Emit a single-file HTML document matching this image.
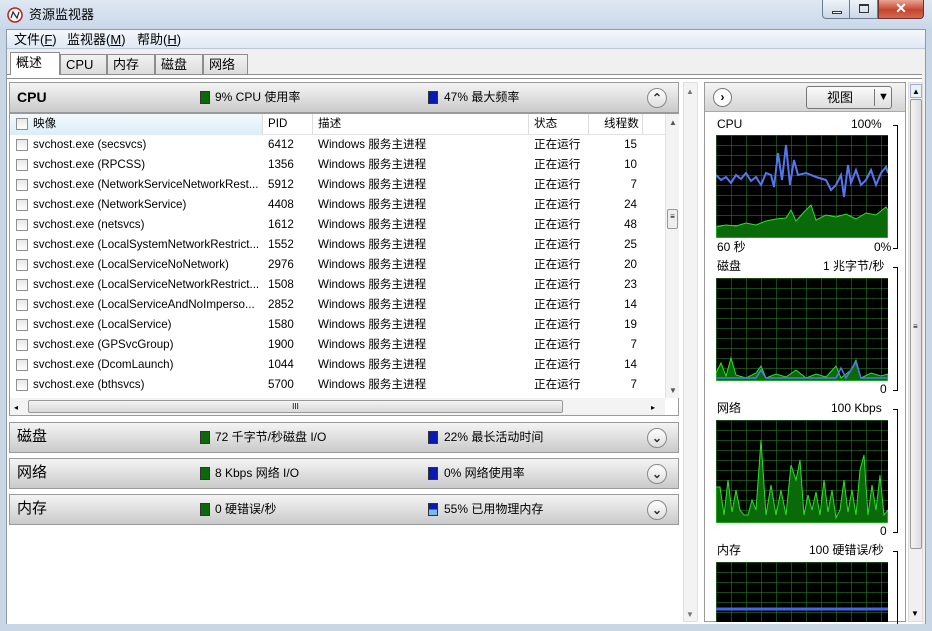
<!DOCTYPE html>
<html><head><meta charset="utf-8">
<style>
*{margin:0;padding:0;box-sizing:border-box}
body{width:932px;height:631px;overflow:hidden;background:#c9d6e6;font-family:"Liberation Sans","Noto Sans CJK SC",sans-serif;font-size:12px;line-height:14px;color:#000;position:relative}
.a{position:absolute}
.title{left:0;top:0;width:932px;height:30px;background:linear-gradient(#dfe8f2,#c8d7e8)}
.frame{left:6px;top:29px;width:920px;height:596px;background:#f0f0f0;border:1px solid #8a9bb0}
.menu{left:7px;top:30px;width:918px;height:19px;background:linear-gradient(#f5f8fc,#dfe8f4);border-bottom:1px solid #b9c7d8}
.menu span{position:absolute;top:2px;font-size:13px;line-height:15px}
.tab{top:54px;height:20px;border:1px solid #8d8d8d;border-bottom:none;background:linear-gradient(#f2f2f2,#dcdcdc);font-size:13px;line-height:15px;padding:2px 0 0 5px}
.content{left:7px;top:74px;width:915px;height:4px;border-top:1px solid #8d8d8d;background:#fff}
.sect{left:9px;width:670px;height:31px;background:linear-gradient(#f4f4f4 0%,#e2e2e2 45%,#c9c9c9 100%);border:1px solid #9a9a9a}
.sect .h{position:absolute;left:7px;top:6px;font-size:15px;line-height:16px}
.sect .l{position:absolute;top:7px;font-size:12px;line-height:14px}
.sq{position:absolute;top:8px;width:10px;height:13px;border:1px solid #333}
.g{background:#0a6a0a}.b{background:#0a1ab0}
.btn{position:absolute;right:11px;top:5px;width:20px;height:20px;border-radius:50%;border:1px solid #888;background:linear-gradient(#fff,#ddd);font-size:12px;text-align:center;line-height:18px;font-weight:bold;color:#333}
.tbl{left:9px;top:113px;width:670px;height:303px;background:#fff;border:1px solid #9a9a9a}
.row{position:absolute;left:0;height:20px;width:655px;font-size:11.6px}
.row span{position:absolute;top:3px;white-space:nowrap;line-height:14px}
.cb{position:absolute;left:6px;top:4px;width:12px;height:12px;border:1px solid #8f8f8f;background:linear-gradient(#e8e8e8,#fff)}
.panel{left:704px;top:82px;width:202px;height:540px;background:#fff;border:1px solid #9a9a9a}
.gl{position:absolute;font-size:12px;line-height:14px}
.brk{position:absolute;left:188px;width:5px;border:1px solid #000;border-left:none}
</style></head><body>
<div class="a title"></div>
<svg class="a" style="left:7px;top:7px" width="16" height="16"><circle cx="8" cy="8" r="7" fill="#fff" stroke="#b22" stroke-width="1.5"/><path d="M4 11 L6 5 L10 11 L12 5" stroke="#333" fill="none" stroke-width="1.3"/></svg>
<div class="a" style="left:29px;top:7px;font-size:13px;line-height:15px">资源监视器</div>
<div class="a" style="left:822px;top:0;width:28px;height:19px;border:1px solid #6b7b90;border-top:none;border-radius:0 0 0 4px;background:linear-gradient(#eef3f9,#cbd7e6)"><div class="a" style="left:9px;top:11px;width:10px;height:3px;border:1px solid #333;background:#fff"></div></div>
<div class="a" style="left:850px;top:0;width:28px;height:19px;border:1px solid #6b7b90;border-top:none;border-left:none;background:linear-gradient(#eef3f9,#cbd7e6)"><div class="a" style="left:9px;top:4px;width:10px;height:9px;border:1px solid #333;border-top-width:2px"></div></div>
<div class="a" style="left:878px;top:0;width:46px;height:19px;border:1px solid #6b3030;border-top:none;border-radius:0 0 4px 0;background:linear-gradient(#e9a595,#c6452e 55%,#d26a50);color:#fff;font-weight:bold;text-align:center;font-size:14px;line-height:16px">✕</div>
<div class="a frame"></div>
<div class="a menu"><span style="left:7px">文件(<u>F</u>)</span><span style="left:60px">监视器(<u>M</u>)</span><span style="left:130px">帮助(<u>H</u>)</span></div>
<div class="a content"></div>
<div class="a tab" style="left:10px;top:52px;width:50px;height:23px;background:#fff;z-index:2">概述</div>
<div class="a tab" style="left:60px;width:47px">CPU</div>
<div class="a tab" style="left:107px;width:48px">内存</div>
<div class="a tab" style="left:155px;width:48px">磁盘</div>
<div class="a tab" style="left:203px;width:45px">网络</div>
<div class="a" style="left:7px;top:78px;width:915px;height:546px;background:#fff;border-top:1px solid #8d8d8d"></div>

<div class="a sect" style="top:82px"><div class="h" style="font-weight:bold;font-size:14px">CPU</div><div class="sq g" style="left:190px"></div><div class="l" style="left:205px">9% CPU 使用率</div><div class="sq b" style="left:418px"></div><div class="l" style="left:434px">47% 最大频率</div><div class="btn">⌃</div></div>

<div class="a tbl">
<div class="a" style="left:0;top:0;width:655px;height:21px;background:#fff;border-bottom:1px solid #e3e3e3"></div>
<div class="a" style="left:0;top:0;width:252px;height:21px;background:linear-gradient(#f3f9fd,#dbedf8)"></div>
<div class="row" style="top:0"><div class="cb"></div><span style="left:23px">映像</span><span style="left:258px">PID</span><span style="left:308px">描述</span><span style="left:524px">状态</span><span style="left:594px">线程数</span></div>
<div class="a" style="left:252px;top:0;width:1px;height:21px;background:#ddd"></div><div class="a" style="left:302px;top:0;width:1px;height:21px;background:#ddd"></div><div class="a" style="left:518px;top:0;width:1px;height:21px;background:#ddd"></div><div class="a" style="left:578px;top:0;width:1px;height:21px;background:#ddd"></div><div class="a" style="left:632px;top:0;width:1px;height:21px;background:#ddd"></div>
<div class="a" style="left:655px;top:0;width:14px;height:284px;background:#f3f3f3;border-left:1px solid #e3e3e3"><div class="a" style="left:1px;top:95px;width:11px;height:20px;border:1px solid #999;border-radius:2px;background:#eee;font-size:8px;text-align:center">≡</div><div class="a" style="left:3px;top:2px;font-size:8px;color:#555">▲</div><div class="a" style="left:3px;top:270px;font-size:8px;color:#555">▼</div></div>
<div class="a" style="left:0;top:284px;width:655px;height:17px;background:#f3f3f3"><div class="a" style="left:18px;top:2px;width:535px;height:13px;border:1px solid #999;border-radius:2px;background:linear-gradient(#f4f4f4,#d8d8d8);text-align:center;font-size:8px;line-height:11px">III</div><div class="a" style="left:4px;top:3px;font-size:8px">◂</div><div class="a" style="left:641px;top:3px;font-size:8px">▸</div></div>
<div id="rows"></div>
</div>

<div class="a sect" style="top:422px"><div class="h">磁盘</div><div class="sq g" style="left:190px"></div><div class="l" style="left:205px">72 千字节/秒磁盘 I/O</div><div class="sq b" style="left:418px"></div><div class="l" style="left:434px">22% 最长活动时间</div><div class="btn">⌄</div></div>
<div class="a sect" style="top:458px"><div class="h">网络</div><div class="sq g" style="left:190px"></div><div class="l" style="left:205px">8 Kbps 网络 I/O</div><div class="sq b" style="left:418px"></div><div class="l" style="left:434px">0% 网络使用率</div><div class="btn">⌄</div></div>
<div class="a sect" style="top:494px"><div class="h">内存</div><div class="sq g" style="left:190px"></div><div class="l" style="left:205px">0 硬错误/秒</div><div class="sq b" style="left:418px;background:linear-gradient(#0a1ab0 50%,#7ab8f0 50%)"></div><div class="l" style="left:434px">55% 已用物理内存</div><div class="btn">⌄</div></div>

<div class="a" style="left:683px;top:82px;width:15px;height:540px;background:#f3f3f3;border:1px solid #e0e0e0"><div class="a" style="left:2px;top:2px;font-size:8px;color:#777">▲</div><div class="a" style="left:2px;top:525px;font-size:8px;color:#777">▼</div></div>
<div class="a" style="left:908px;top:82px;width:15px;height:540px;background:#f0f0f0;border:1px solid #ddd"><div class="a" style="left:1px;top:1px;width:12px;height:14px;border:1px solid #aac;background:#e8f0f8;font-size:8px;text-align:center">▲</div><div class="a" style="left:1px;top:16px;width:12px;height:450px;border:1px solid #999;border-radius:2px;background:linear-gradient(90deg,#f4f4f4,#dcdcdc)"><div class="a" style="left:2px;top:220px;font-size:8px">≡</div></div><div class="a" style="left:2px;top:524px;font-size:8px">▼</div></div>

<div class="a panel">
<div class="a" style="left:0;top:0;width:200px;height:29px;background:linear-gradient(#f4f4f4,#d4d4d4);border-bottom:1px solid #aaa"><div class="a" style="left:8px;top:5px;width:19px;height:19px;border-radius:50%;border:1px solid #777;background:#fff;text-align:center;font-weight:bold;line-height:16px">›</div><div class="a" style="left:101px;top:3px;width:86px;height:23px;border:1px solid #777;border-radius:3px;background:linear-gradient(#fafafa,#dedede);font-size:13px"><span class="a" style="left:20px;top:3px;line-height:15px">视图</span><div class="a" style="left:67px;top:2px;width:1px;height:17px;background:#777"></div><span class="a" style="left:71px;top:3px;font-size:11px">▼</span></div></div>
<div class="gl" style="left:12px;top:34px">CPU</div><div class="gl" style="left:146px;top:34px">100%</div>
<div class="gl" style="left:12px;top:157px">60 秒</div><div class="gl" style="left:169px;top:157px">0%</div>
<div class="brk" style="top:42px;height:124px"></div>
<div class="gl" style="left:12px;top:176px">磁盘</div><div class="gl" style="left:118px;top:176px">1 兆字节/秒</div>
<div class="gl" style="left:175px;top:299px">0</div><div class="brk" style="top:184px;height:124px"></div>
<div class="gl" style="left:12px;top:318px">网络</div><div class="gl" style="left:126px;top:318px">100 Kbps</div>
<div class="gl" style="left:175px;top:441px">0</div><div class="brk" style="top:326px;height:124px"></div>
<div class="gl" style="left:12px;top:460px">内存</div><div class="gl" style="left:104px;top:460px">100 硬错误/秒</div>
<div class="brk" style="top:468px;height:80px;border-bottom:none"></div>
</div>

<svg class="a" style="left:716px;top:135px" width="172" height="103">
<defs><pattern id="gr" width="15" height="10" patternUnits="userSpaceOnUse"><path d="M0 0V10M0 0H15" stroke="#2e8b2e" stroke-width="1" fill="none"/></pattern></defs>
<rect width="172" height="103" fill="#000"/><rect width="172" height="103" fill="url(#gr)"/>
<polygon points="0,103 0,92 10,90 20,91 30,88 40,90 50,86 60,84 70,83 75,75 80,86 88,77 95,70 100,85 110,80 120,82 130,79 140,84 150,78 160,80 170,72 172,75 172,103" fill="#0a6a0a" stroke="#2ede2e"/>
<polyline points="0,40 5,45 10,42 15,48 20,40 25,44 30,38 35,46 40,42 45,50 50,38 55,40 58,52 62,18 66,45 70,10 74,50 78,25 82,40 90,38 100,42 110,45 115,55 120,50 125,40 128,62 132,30 135,48 140,35 145,50 150,45 155,35 160,50 165,38 170,32 172,38" fill="none" stroke="#5577ee" stroke-width="2"/>
</svg>
<svg class="a" style="left:716px;top:278px" width="172" height="103">
<rect width="172" height="103" fill="#000"/><rect width="172" height="103" fill="url(#gr)"/>
<polygon points="0,103 0,95 5,85 10,98 15,80 20,97 30,100 40,95 45,88 50,100 60,96 70,99 80,92 90,100 100,96 110,99 120,88 125,100 135,92 140,82 145,100 155,95 165,98 172,96 172,103" fill="#0a6a0a" stroke="#2ede2e"/>
<polyline points="0,100 40,100 45,92 50,100 120,100 125,90 130,100 140,84 145,100 172,100" fill="none" stroke="#5577ee" stroke-width="1.5"/>
</svg>
<svg class="a" style="left:716px;top:420px" width="172" height="103">
<rect width="172" height="103" fill="#000"/><rect width="172" height="103" fill="url(#gr)"/>
<polygon points="0,103 0,67 4,67 8,95 12,60 16,92 20,70 24,90 28,95 32,95 36,80 40,90 45,20 50,95 55,65 60,95 65,70 70,95 75,45 80,60 84,40 88,95 92,75 96,90 100,72 104,95 108,60 112,92 116,70 120,98 124,90 128,60 132,92 136,70 140,95 144,50 148,35 152,95 156,65 160,90 164,55 168,95 172,90 172,103" fill="#0a6a0a" stroke="#2ede2e"/>
</svg>
<svg class="a" style="left:716px;top:562px" width="172" height="60">
<rect width="172" height="60" fill="#000"/><rect width="172" height="60" fill="url(#gr)"/>
<line x1="0" y1="47" x2="172" y2="47" stroke="#4466ee" stroke-width="3"/>
</svg>
<div class="a" style="left:0;top:624px;width:932px;height:7px;background:#c9d6e6"></div>

<script>
var d=[["svchost.exe (secsvcs)",6412,15],["svchost.exe (RPCSS)",1356,10],["svchost.exe (NetworkServiceNetworkRest...",5912,7],["svchost.exe (NetworkService)",4408,24],["svchost.exe (netsvcs)",1612,48],["svchost.exe (LocalSystemNetworkRestrict...",1552,25],["svchost.exe (LocalServiceNoNetwork)",2976,20],["svchost.exe (LocalServiceNetworkRestrict...",1508,23],["svchost.exe (LocalServiceAndNoImperso...",2852,14],["svchost.exe (LocalService)",1580,19],["svchost.exe (GPSvcGroup)",1900,7],["svchost.exe (DcomLaunch)",1044,14],["svchost.exe (bthsvcs)",5700,7]];
var h="";d.forEach(function(r,i){h+='<div class="row" style="top:'+(21+i*20)+'px"><div class="cb"></div><span style="left:23px">'+r[0]+'</span><span style="left:258px">'+r[1]+'</span><span style="left:308px">Windows 服务主进程</span><span style="left:524px">正在运行</span><span style="right:28px">'+r[2]+'</span></div>';});
document.getElementById("rows").innerHTML=h;
</script>
</body></html>
